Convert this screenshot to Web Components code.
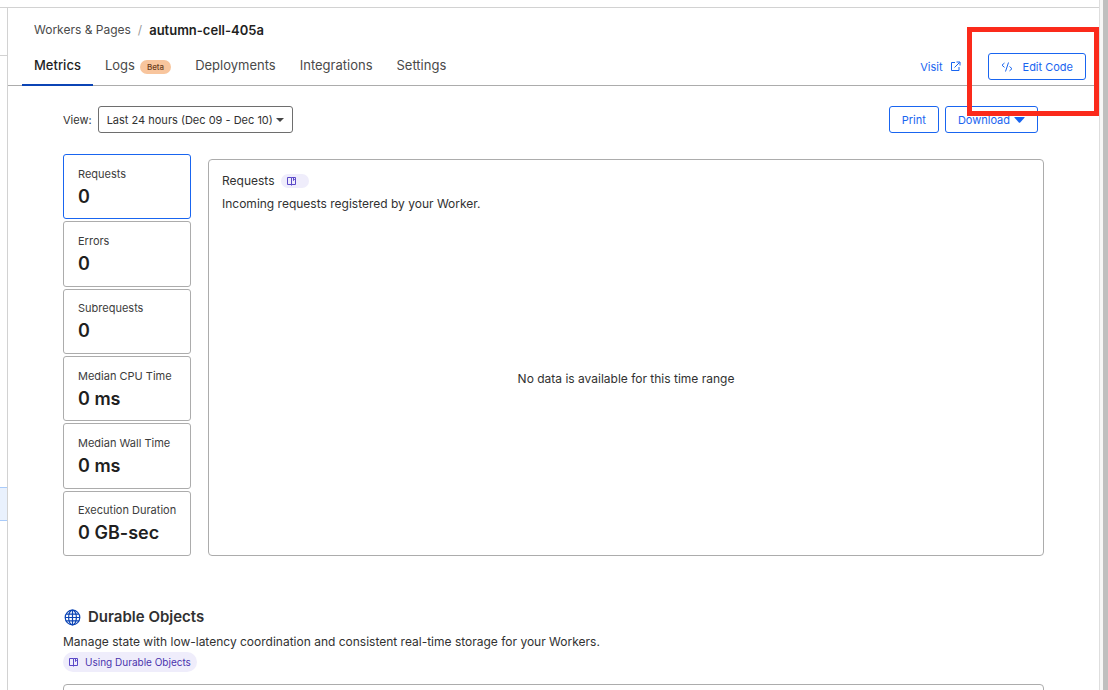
<!DOCTYPE html>
<html lang="en">
<head>
<meta charset="utf-8">
<meta name="viewport" content="width=device-width, initial-scale=1">
<title>autumn-cell-405a</title>
<style>
  body { margin: 0; background: #fff; color: #313131; font: 12px/20px Inter, "Liberation Sans", sans-serif;
    --blue: #1965f0; --navy: #0b44b5; --line: #acacac; --frame: #d2d2d2; --ink: #1f1f1f; --soft: #4a4a4a; }
</style>
</head>
<body>
<app-frame>
  <page-header slot="header" section="Workers &amp; Pages" name="autumn-cell-405a">
    <tab-link active>Metrics</tab-link>
    <tab-link badge="Beta">Logs</tab-link>
    <tab-link>Deployments</tab-link>
    <tab-link>Integrations</tab-link>
    <tab-link>Settings</tab-link>
    <visit-link slot="actions">Visit</visit-link>
    <focus-frame slot="actions"><line-button icon="code">Edit Code</line-button></focus-frame>
  </page-header>
  <view-toolbar>
    <line-button>Print</line-button>
    <line-button icon="caret">Download</line-button>
  </view-toolbar>
  <metrics-panel>
    <metric-card slot="metrics" label="Requests" active>0</metric-card>
    <metric-card slot="metrics" label="Errors">0</metric-card>
    <metric-card slot="metrics" label="Subrequests">0</metric-card>
    <metric-card slot="metrics" label="Median CPU Time">0 ms</metric-card>
    <metric-card slot="metrics" label="Median Wall Time">0 ms</metric-card>
    <metric-card slot="metrics" label="Execution Duration">0 GB-sec</metric-card>
    <chart-card heading="Requests" description="Incoming requests registered by your Worker.">No data is available for this time range</chart-card>
  </metrics-panel>
  <durable-objects></durable-objects>
</app-frame>

<script>
const define = (tag, html, setup) => customElements.define(tag, class extends HTMLElement {
  constructor() {
    super();
    const template = document.createElement('template');
    template.innerHTML = html;
    this.attachShadow({ mode: 'open' }).append(template.content.cloneNode(true));
  }
  connectedCallback() { if (setup) setup(this, this.shadowRoot); }
});

define('app-frame', `
  <style>
    :host { display: grid; grid-template: 7px minmax(0, 1fr) / 7px minmax(0, 1fr) 9px; height: 100vh; overflow: hidden; }
    .top { grid-column: 1 / 3; }
    aside { grid-area: 2 / 1; border-top: 1px solid var(--frame); }
    .brand { height: 47px; border-bottom: 1px solid var(--frame); }
    .current { height: 32px; margin-top: 431px; background: #e9f1fd; border: solid #a9cbfa; border-width: 1px 0; }
    main { grid-area: 2 / 2; border: solid var(--frame); border-width: 1px 0 0 1px; overflow: hidden auto; scrollbar-width: none; }
    .content { padding: 20px 55px; }
    .edge { grid-area: 1 / 3 / 3 / 4; background: #f7f7f7; border-left: 1px solid #dedede; border-right: 5px solid #bfbfbf; }
  </style>
  <div class="top"></div>
  <aside><div class="brand"></div><div class="current"></div></aside>
  <main><slot name="header"></slot><div class="content"><slot></slot></div></main>
  <div class="edge"></div>`);

define('page-header', `
  <style>
    :host { display: block; border-bottom: 1px solid var(--line); padding: 12px 13px 0; }
    .crumbs { display: flex; gap: 7px; padding: 0 13px; }
    .crumbs a { color: var(--soft); text-decoration: none; }
    .crumbs i { color: #999; font-style: normal; }
    .crumbs b { color: var(--ink); font-size: 13px; font-weight: 600; }
    .row { display: flex; height: 45px; }
    nav { display: flex; padding-left: 1px; font-size: 13px; }
    .actions { display: flex; align-items: center; gap: 27px; margin-left: auto; padding-top: 8px; }
  </style>
  <div class="crumbs"><a href="#"></a><i>/</i><b></b></div>
  <div class="row"><nav><slot></slot></nav><div class="actions"><slot name="actions"></slot></div></div>`,
  (el, root) => {
    root.querySelector('a').textContent = el.getAttribute('section');
    root.querySelector('b').textContent = el.getAttribute('name');
  });

define('tab-link', `
  <style>
    :host { display: block; height: 46px; }
    a { box-sizing: border-box; display: flex; gap: 5px; height: 46px; padding: 15px 12px 0; color: var(--soft); text-decoration: none; }
    :host([active]) a { color: var(--ink); font-weight: 500; border-bottom: 2px solid var(--navy); }
    span { height: 14px; margin-top: 5px; padding: 0 7px; border-radius: 7px; background: #f8c59d; color: #6b3d1c; font-size: 8px; line-height: 14px; font-weight: 500; }
    span:empty { display: none; }
  </style>
  <a href="#"><slot></slot><span></span></a>`,
  (el, root) => { root.querySelector('span').textContent = el.getAttribute('badge') || ''; });

define('visit-link', `
  <style>
    :host { display: block; }
    a { display: flex; align-items: center; gap: 7px; color: var(--blue); font-size: 11px; text-decoration: none; }
    svg { display: block; }
  </style>
  <a href="#"><slot></slot><svg width="11" height="11" viewBox="0 0 11 11" fill="none" stroke="currentColor"><path d="M5 1.5H1.500v8h7.500V6M4.500 6.500l5-5M6.500 1h3.500v3.500"/></svg></a>`);

/* Red callout drawn round the action inside it; it spills over its neighbours. */
define('focus-frame', `
  <style>
    :host { display: block; position: relative; }
    .ring { position: absolute; inset: -26px -13px -36px -21px; z-index: 2; border: 5px solid #fb2a1b; pointer-events: none; }
  </style>
  <slot></slot><div class="ring"></div>`);

const buttonIcons = {
  code: '<svg width="12" height="10" viewBox="0 0 12 10" fill="none" stroke="currentColor"><path d="M3.500 1L1 3.200l2.500 2.200M8.500 4.500L11 6.700 8.500 8.900M7.500 .5L4.500 9.500"/></svg>',
  caret: '<svg width="11" height="6" viewBox="0 0 11 6" fill="currentColor"><path d="M.8 0h9.400q.8 0 .3.700L6.200 5.500q-.7.600-1.400 0L.5.700Q0 0 .8 0z"/></svg>'
};
define('line-button', `
  <style>
    :host { display: block; }
    button { box-sizing: border-box; display: flex; align-items: center; height: 27px; padding: 0 12px; background: #fff; border: 1px solid var(--blue); border-radius: 3px; color: var(--blue); font: inherit; font-size: 11px; white-space: nowrap; }
    svg { display: block; }
    :host([icon=code]) button { gap: 10px; }
    :host([icon=caret]) button { flex-direction: row-reverse; gap: 4px; }
  </style>
  <button type="button"><slot></slot></button>`,
  (el, root) => {
    const icon = buttonIcons[el.getAttribute('icon')];
    if (icon && !root.querySelector('svg')) root.querySelector('button').insertAdjacentHTML('afterbegin', icon);
  });

define('view-toolbar', `
  <style>
    :host { display: flex; align-items: center; gap: 6px; padding-right: 6px; }
    label { font-size: 11px; }
    .pick { display: grid; align-items: center; margin-right: auto; }
    select, svg { grid-area: 1 / 1; }
    select { box-sizing: border-box; appearance: none; width: 195px; height: 27px; padding: 0 8px; margin: 0; background: #fff; border: 1px solid #6e6e6e; border-radius: 3px; color: #313131; font: inherit; font-size: 11px; }
    svg { justify-self: end; margin-right: 9px; pointer-events: none; }
  </style>
  <label for="range">View:</label>
  <div class="pick">
    <select id="range"><option>Last 24 hours (Dec 09 - Dec 10)</option></select>
    <svg width="8" height="4" viewBox="0 0 8 4" fill="#444"><path d="M0 0h8L4 4z"/></svg>
  </div>
  <slot></slot>`);

define('metrics-panel', `
  <style>
    :host { display: grid; grid-template-columns: 128px minmax(0, 1fr); gap: 17px; margin-top: 21px; }
    .list { display: grid; grid-auto-rows: 1fr; gap: 2px; min-height: 402px; }
    .chart { display: grid; padding-top: 5px; }
  </style>
  <div class="list"><slot name="metrics"></slot></div><div class="chart"><slot></slot></div>`);

define('metric-card', `
  <style>
    :host { display: grid; }
    button { display: flex; flex-direction: column; justify-content: center; padding: 0 0 0 14px; background: #fff; border: 1px solid var(--line); border-radius: 3px; font: inherit; text-align: left; white-space: nowrap; }
    :host([active]) button { border-color: var(--blue); }
    .label { color: #3c3c3c; font-size: 11px; line-height: 20px; }
    .value { color: var(--ink); font-size: 18px; line-height: 26px; font-weight: 600; }
  </style>
  <button type="button"><span class="label"></span><span class="value"><slot></slot></span></button>`,
  (el, root) => { root.querySelector('.label').textContent = el.getAttribute('label'); });

define('doc-pill', `
  <style>
    :host { display: inline-block; vertical-align: top; }
    a { box-sizing: border-box; display: flex; align-items: center; gap: 6px; height: 20px; padding: 0 6px; border-radius: 10px; background: #efedfb; color: #4a34ae; font-size: 10px; text-decoration: none; }
    :host([compact]) a { width: 28px; height: 14px; }
    svg { display: block; }
  </style>
  <a href="#" aria-label="Documentation"><svg width="10" height="9" viewBox="0 0 10 9" fill="none" stroke="#5a48c8"><path d="M4.500 7.500h-4v-7h4v8M4.500 .5h4v7h-4M6.500 .5v3l1-1 1 1"/></svg><slot></slot></a>`,
  (el, root) => { if (!el.hasAttribute('compact')) root.querySelector('a').removeAttribute('aria-label'); });

define('chart-card', `
  <style>
    :host { box-sizing: border-box; display: flex; flex-direction: column; padding: 11px 13px; border: 1px solid var(--line); border-radius: 4px; }
    header { display: flex; align-items: center; gap: 7px; }
    h2 { margin: 0; font: inherit; }
    p { margin: 3px 0 0; }
    .empty { flex: 1; display: grid; place-items: center; }
  </style>
  <header><h2></h2><doc-pill compact></doc-pill></header><p></p>
  <div class="empty"><div><slot></slot></div></div>`,
  (el, root) => {
    root.querySelector('h2').textContent = el.getAttribute('heading');
    root.querySelector('p').textContent = el.getAttribute('description');
  });

define('durable-objects', `
  <style>
    :host { display: block; margin-top: 49px; }
    header { display: flex; align-items: center; gap: 7px; padding-left: 1px; }
    h2 { margin: 0; font-size: 15px; line-height: 24px; font-weight: 600; }
    p { margin: 3px 0 0; }
    svg { display: block; }
    .card { height: 120px; margin-top: 12px; border: 1px solid var(--line); border-radius: 4px; }
  </style>
  <header><svg width="17" height="17" viewBox="0 0 17 17" fill="none" stroke="#0b44b5" stroke-width="1.200"><circle cx="8.500" cy="8.500" r="7.300"/><ellipse cx="8.500" cy="8.500" rx="3.900" ry="7.300"/><path d="M8.500 1v15M1 8.500h15M2.200 5.200h12.600M2.200 11.800h12.600"/></svg><h2>Durable Objects</h2></header>
  <p>Manage state with low-latency coordination and consistent real-time storage for your Workers.</p>
  <doc-pill>Using Durable Objects</doc-pill>
  <div class="card"></div>`);
</script>
</body>
</html>
